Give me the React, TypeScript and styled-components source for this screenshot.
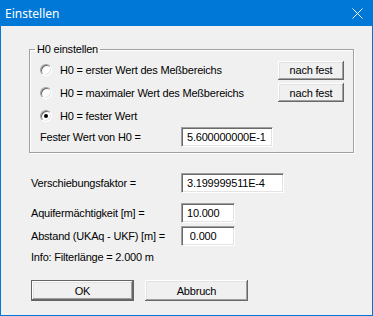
import React from "react";
import styled, { createGlobalStyle } from "styled-components";

const GlobalStyle = createGlobalStyle`
  html, body {
    margin: 0;
    padding: 0;
    background: #f0f0f0;
  }
  body {
    font-family: "Liberation Sans", Arial, sans-serif;
    font-size: 11px;
    letter-spacing: -0.2px;
    color: #000;
  }
`;

const Window = styled.div`
  box-sizing: border-box;
  width: 373px;
  height: 316px;
  border: 1px solid #0078d7;
  border-top: none;
  background: #f0f0f0;
  display: flex;
  flex-direction: column;
`;

const TitleBar = styled.div`
  flex: none;
  height: 26px;
  background: #0078d7;
  color: #fff;
  display: flex;
  align-items: center;
  justify-content: space-between;
  padding: 0 9px 0 4px;
  font-family: "Noto Sans", "Open Sans", sans-serif;
  font-size: 12px;
  letter-spacing: 0;
`;

const CloseIcon = () => (
  <svg width="11" height="11" viewBox="0 0 11 11">
    <path d="M0.5 0.5 L10.5 10.5 M10.5 0.5 L0.5 10.5" stroke="#fff" strokeWidth="1" fill="none" />
  </svg>
);

const Body = styled.div`
  padding: 17px 0 0 30px;
  display: flex;
  flex-direction: column;
`;

const Group = styled.fieldset`
  margin: 0 18px 0 -2px;
  padding: 3px 9px 5px 10px;
  border: 1px solid #a0a0a0;
  box-shadow: 1px 1px 0 #fff, inset 1px 1px 0 #fff;
  display: grid;
  grid-template-rows: 22px 23px 23px 20px;
`;

const Legend = styled.legend`
  padding: 0 2px;
  margin-left: -5px;
  line-height: 13px;
`;

const Row = styled.div<{ $top?: number }>`
  display: flex;
  align-items: center;
  margin-top: ${p => p.$top ?? 0}px;
`;

const Radio = styled.span<{ $checked?: boolean }>`
  box-sizing: border-box;
  flex: none;
  width: 12px;
  height: 12px;
  margin-right: 8px;
  border-radius: 50%;
  background: #fff;
  border: 1px solid;
  border-color: #a0a0a0 #fff #fff #a0a0a0;
  box-shadow: inset 1px 1px 0 #696969, inset -1px -1px 0 #e3e3e3;
  display: flex;
  align-items: center;
  justify-content: center;

  &::after {
    content: "";
    width: 4px;
    height: 4px;
    border-radius: 50%;
    background: #000;
    display: ${p => (p.$checked ? "block" : "none")};
  }
`;

const Label = styled.span<{ $width?: number }>`
  flex: none;
  width: ${p => (p.$width ? `${p.$width}px` : "auto")};
  white-space: pre;
`;

const Button = styled.button<{ $width: number; $height: number; $default?: boolean }>`
  box-sizing: border-box;
  width: ${p => p.$width}px;
  height: ${p => p.$height}px;
  margin: 0;
  padding: 0;
  font: inherit;
  letter-spacing: inherit;
  color: #000;
  background: #f0f0f0;
  border: ${p => (p.$default ? "1px solid #646464" : "none")};
  box-shadow: inset -1px -1px 0 #696969, inset 1px 1px 0 #fff,
    inset -2px -2px 0 #a0a0a0, inset 2px 2px 0 #e3e3e3;
  cursor: default;
`;

const SideButton = styled(Button)`
  margin-left: auto;
`;

const Field = styled.input<{ $width: number }>`
  box-sizing: border-box;
  width: ${p => p.$width}px;
  height: 20px;
  margin: 0;
  padding: 0 0 0 5px;
  font: inherit;
  letter-spacing: inherit;
  color: #000;
  background: #fff;
  border: 1px solid;
  border-color: #a0a0a0 #fff #fff #a0a0a0;
  box-shadow: inset 1px 1px 0 #696969, inset -1px -1px 0 #e3e3e3;
  outline: none;
`;

const InfoLine = styled.div`
  margin-top: 5px;
  line-height: 13px;
`;

const ButtonBar = styled.div`
  display: flex;
  gap: 11px;
  margin-top: 16px;
`;

export default function App() {
  return (
    <>
      <GlobalStyle />
      <Window>
        <TitleBar>
          <span>Einstellen</span>
          <CloseIcon />
        </TitleBar>
        <Body>
          <Group>
            <Legend>H0 einstellen</Legend>
            <Row>
              <Radio />
              <Label>H0 = erster Wert des Meßbereichs</Label>
              <SideButton $width={66} $height={19}>nach fest</SideButton>
            </Row>
            <Row>
              <Radio />
              <Label>H0 = maximaler Wert des Meßbereichs</Label>
              <SideButton $width={66} $height={19}>nach fest</SideButton>
            </Row>
            <Row>
              <Radio $checked />
              <Label>H0 = fester Wert</Label>
            </Row>
            <Row>
              <Label $width={141}>Fester Wert von H0 =</Label>
              <Field $width={92} readOnly defaultValue="5.600000000E-1" />
            </Row>
          </Group>

          <Row $top={20}>
            <Label $width={150}>Verschiebungsfaktor =</Label>
            <Field $width={103} readOnly defaultValue="3.199999511E-4" />
          </Row>
          <Row $top={10}>
            <Label $width={150}>Aquifermächtigkeit [m] =</Label>
            <Field $width={54} readOnly defaultValue="10.000" />
          </Row>
          <Row $top={3}>
            <Label $width={150}>Abstand (UKAq - UKF) [m] =</Label>
            <Field $width={54} readOnly defaultValue=" 0.000" />
          </Row>
          <InfoLine>Info: Filterlänge = 2.000 m</InfoLine>

          <ButtonBar>
            <Button $width={103} $height={21} $default>OK</Button>
            <Button $width={103} $height={21}>Abbruch</Button>
          </ButtonBar>
        </Body>
      </Window>
    </>
  );
}
